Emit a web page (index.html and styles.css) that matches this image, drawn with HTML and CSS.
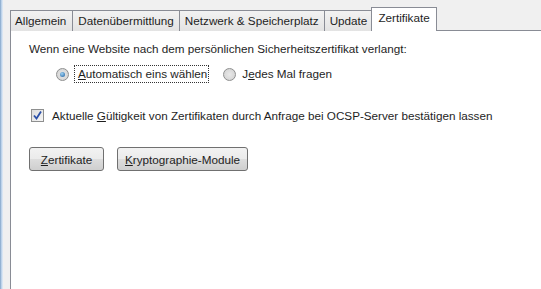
FILE: index.html
```html
<!DOCTYPE html>
<html lang="de">
<head>
  <meta charset="UTF-8" />
  <title>Einstellungen - Zertifikate</title>
  <link rel="stylesheet" href="styles.css">
</head>
<body>
  <div class="window">
    <div class="frame-edge"></div>
    <div class="page">
      <div class="tabs">
        <div class="tab">Allgemein</div>
        <div class="tab">Datenübermittlung</div>
        <div class="tab">Netzwerk &amp; Speicherplatz</div>
        <div class="tab">Update</div>
        <div class="tab active">Zertifikate</div>
      </div>
      <div class="panel">
        <div class="label">Wenn eine Website nach dem persönlichen Sicherheitszertifikat verlangt:</div>
        <div class="radios">
          <div class="option">
            <span class="radio checked"></span>
            <span class="focus"><u>A</u>utomatisch eins wählen</span>
          </div>
          <div class="option">
            <span class="radio"></span>
            <span class="plain">J<u>e</u>des Mal fragen</span>
          </div>
        </div>
        <div class="check-row">
          <span class="checkbox">
            <svg width="9" height="9" viewBox="0 0 9 9"><path d="M1 4.5 L3.5 7.5 L8 0.5" fill="none" stroke="#2a4fa8" stroke-width="1.8"/></svg>
          </span>
          <span>Aktuelle <u>G</u>ültigkeit von Zertifikaten durch Anfrage bei OCSP-Server bestätigen lassen</span>
        </div>
        <div class="buttons">
          <button class="btn btn-small"><u>Z</u>ertifikate</button>
          <button class="btn"><u>K</u>ryptographie-Module</button>
        </div>
      </div>
    </div>
  </div>
</body>
</html>
```

FILE: styles.css
```css
html, body {
  margin: 0;
  height: 100%;
  overflow: hidden;
}

body {
  font-family: 'Liberation Sans', Arial, sans-serif;
  font-size: 11.7px;
  color: #1e1e1e;
  background: #f0f0f0;
}

.window {
  display: flex;
  height: 100%;
}

.frame-edge {
  width: 3px;
  background: linear-gradient(to right, #7fa3c8, #c9dcf0 60%, #e4ecf5);
  flex-shrink: 0;
}

.page {
  flex: 1;
  display: flex;
  flex-direction: column;
  padding: 8px 0 0 7px;
  min-width: 0;
}

.tabs {
  display: flex;
  align-items: flex-end;
  height: 23px;
  position: relative;
  z-index: 1;
  margin-bottom: -1px;
}

.tab {
  height: 20px;
  line-height: 19px;
  padding: 0 5px;
  border: 1px solid #898c95;
  border-bottom: none;
  border-right: none;
  background: linear-gradient(to bottom, #f2f2f2, #e3e3e3);
  white-space: nowrap;
}

.tab:first-child {
  padding: 0 6px 0 4px;
}

.tab.active {
  height: 23px;
  line-height: 20px;
  padding: 0 6px;
  background: #fff;
  border-right: 1px solid #898c95;
  margin-left: -1px;
}

.panel {
  flex: 1;
  background: #fff;
  border-top: 1px solid #898c95;
  border-left: 1px solid #898c95;
  padding: 11px 0 0 18px;
}

.label {
  height: 15px;
}

.radios {
  display: flex;
  gap: 14px;
  margin: 8px 0 0 27px;
}

.option {
  display: flex;
  align-items: center;
  gap: 5px;
}

.radio {
  width: 11px;
  height: 11px;
  border-radius: 50%;
  border: 1px solid #8e8f8f;
  background: radial-gradient(circle at 50% 50%, #e8e8e8, #d0d0d0);
  display: flex;
  align-items: center;
  justify-content: center;
}

.radio.checked::after {
  content: "";
  width: 5px;
  height: 5px;
  border-radius: 50%;
  background: radial-gradient(circle at 40% 35%, #9fd3f5, #1c5c9c);
}

.focus {
  border: 1px dotted #333;
  padding: 1px 1px 2px 3px;
}

.plain {
  padding: 1px 1px 2px 1px;
}

.check-row {
  display: flex;
  align-items: center;
  gap: 8px;
  margin: 26px 0 0 2px;
}

.checkbox {
  width: 11px;
  height: 11px;
  border: 1px solid #8e8f8f;
  background: linear-gradient(to bottom right, #dcdcdc, #f6f6f6);
  display: flex;
  align-items: center;
  justify-content: center;
}

.buttons {
  display: flex;
  gap: 13px;
  margin-top: 25px;
}

.btn {
  font-family: inherit;
  font-size: 11.7px;
  color: #1e1e1e;
  height: 24px;
  padding: 0 7px;
  border: 1px solid #707070;
  border-radius: 3px;
  background: linear-gradient(to bottom, #f2f2f2 0%, #ebebeb 50%, #dddddd 51%, #cfcfcf 100%);
}

.btn-small {
  width: 75px;
}
```
